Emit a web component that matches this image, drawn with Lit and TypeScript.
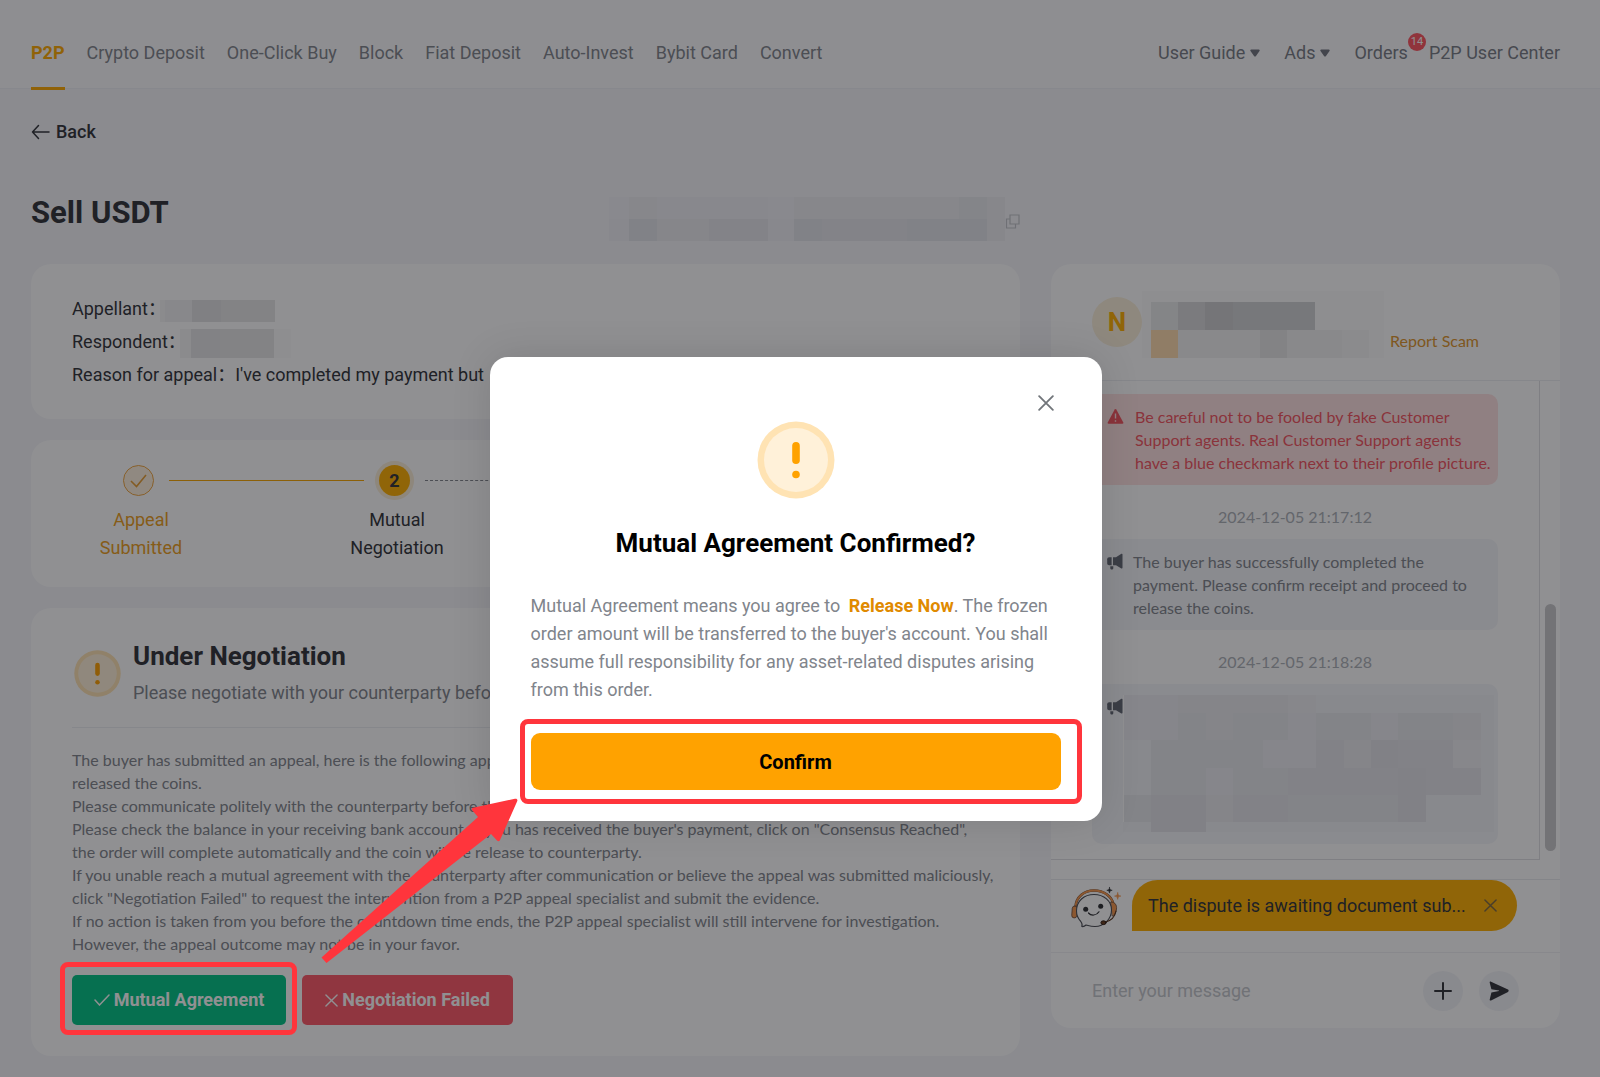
import { LitElement, html, svg, css } from "lit";
import { customElement } from "lit/decorators.js";

type Cell = [x: number, y: number, w: number, h: number, alpha: number];

const NAV = ["P2P", "Crypto Deposit", "One-Click Buy", "Block", "Fiat Deposit", "Auto-Invest", "Bybit Card", "Convert"];

const GUIDE: string[] = [
  "The buyer has submitted an appeal, here is the following appeal",
  "released the coins.",
  "Please communicate politely with the counterparty before the",
  "Please check the balance in your receiving bank account. If you has received the buyer's payment, click on \"Consensus Reached\",",
  "the order will complete automatically and the coin will be release to counterparty.",
  "If you unable reach a mutual agreement with the counterparty after communication or believe the appeal was submitted maliciously,",
  "click \"Negotiation Failed\" to request the intervention from a P2P appeal specialist and submit the evidence.",
  "If no action is taken from you before the countdown time ends, the P2P appeal specialist will still intervene for investigation.",
  "However, the appeal outcome may not be in your favor.",
];

const ORDER_ID: Cell[] = [
  [0, 0, 20, 22, 0.01], [20, 0, 28, 22, 0.03], [48, 0, 82, 22, 0.02], [130, 0, 29, 22, 0.02], [159, 0, 26, 22, 0.01], [185, 0, 165, 22, 0.03], [350, 0, 28, 22, 0.05], [378, 0, 18, 22, 0.03],
  [0, 22, 20, 22, 0.02], [20, 22, 28, 22, 0.07], [48, 22, 52, 22, 0.04], [100, 22, 59, 22, 0.06], [159, 22, 26, 22, 0.02], [185, 22, 28, 22, 0.07], [213, 22, 85, 22, 0.06], [298, 22, 80, 22, 0.07], [378, 22, 18, 22, 0.03],
];
const APPELLANT: Cell[] = [[0, 0, 5, 22, 0.04], [5, 0, 27, 22, 0.06], [32, 0, 29, 22, 0.12], [61, 0, 54, 22, 0.1]];
const RESPONDENT: Cell[] = [[0, 0, 11, 29, 0.04], [11, 0, 29, 29, 0.11], [40, 0, 54, 29, 0.1], [94, 0, 17, 29, 0.01]];
const NICKNAME: Cell[] = [
  [0, 4, 242, 67, 0.01],
  [9, 15, 27, 28, 0.08], [36, 15, 27, 28, 0.15], [63, 15, 28, 28, 0.2], [91, 15, 82, 28, 0.18],
  [36, 43, 82, 28, 0.04], [118, 43, 27, 28, 0.09], [145, 43, 55, 28, 0.04], [200, 43, 27, 28, 0.03],
];
const MESSAGE: Cell[] = [
  [0, 0, 379, 137, 0.01], [0, 0, 55, 18, 0.02], [55, 0, 110, 18, 0.03], [165, 0, 28, 18, 0.01],
  [0, 18, 55, 27, 0.02], [55, 18, 28, 27, 0.04], [83, 18, 27, 27, 0.03], [110, 18, 55, 27, 0.04], [165, 18, 28, 27, 0.02], [193, 18, 55, 27, 0.04], [248, 18, 27, 27, 0.02], [275, 18, 55, 27, 0.04], [330, 18, 28, 27, 0.03],
  [28, 45, 112, 28, 0.04], [140, 45, 53, 28, 0.02], [193, 45, 28, 28, 0.05], [221, 45, 27, 28, 0.03], [248, 45, 27, 28, 0.06], [275, 45, 55, 28, 0.05], [330, 45, 28, 28, 0.01],
  [28, 73, 55, 27, 0.04], [83, 73, 27, 27, 0.02], [110, 73, 55, 27, 0.04], [165, 73, 110, 27, 0.05], [275, 73, 28, 27, 0.06], [303, 73, 55, 27, 0.05],
  [0, 100, 28, 27, 0.04], [28, 100, 55, 37, 0.06], [83, 100, 27, 27, 0.03], [110, 100, 55, 27, 0.05], [165, 100, 110, 27, 0.04], [275, 100, 28, 27, 0.06],
];

const mosaic = (w: number, h: number, cells: Cell[], extra: unknown = null) => html`
  <svg class="mosaic" width=${w} height=${h} viewBox="0 0 ${w} ${h}" shape-rendering="crispEdges" aria-hidden="true">
    ${cells.map(([x, y, cw, ch, a]) => svg`<rect x=${x} y=${y} width=${cw} height=${ch} fill="#121420" fill-opacity=${a}></rect>`)}
    ${extra}
  </svg>`;

const caret = html`<svg width="10" height="8" viewBox="0 0 10 8" aria-hidden="true"><path d="M1.2.5h7.6c.8 0 1.2.9.7 1.5L6 7c-.5.7-1.500.7-2 0L.5 2C0 1.400.4.5 1.200.5z" fill="#71757f"/></svg>`;

const cross = (size: number, color: string, width: number) => html`
  <svg width=${size} height=${size} viewBox="0 0 14 14" fill="none" stroke=${color} stroke-width=${width} stroke-linecap="round" aria-hidden="true"><path d="M1 1l12 12M13 1L1 13"/></svg>`;

const alertMark = (size: number) => html`
  <svg width=${size} height=${size} viewBox="0 0 78 78" aria-hidden="true">
    <circle cx="39" cy="39" r="38.500" fill="#ffe3b3"/><circle cx="39" cy="39" r="32" fill="#fff1d9"/>
    <rect x="35.200" y="21" width="7.600" height="22" rx="3.800" fill="#ffa200"/><circle cx="39" cy="53.500" r="3.800" fill="#ffa200"/>
  </svg>`;

const megaphone = html`
  <svg class="lead" width="16" height="17" viewBox="0 0 16 17" fill="#636873" aria-hidden="true">
    <path d="M15.500 1.200v13.600c0 .7-.6.9-1.100.6L9 12.300H6V4.200h3L14.400.8c.5-.3 1.100-.2 1.100.4z"/>
    <path d="M4.600 4.200v8H2.200C1 12.200.2 11.400.2 10.200V6.200c0-1.200.8-2 2-2z"/>
    <path d="M3.300 13.300h3v2c0 1.600-3 1.600-3 0z"/>
  </svg>`;

@customElement("app-root")
export class AppRoot extends LitElement {
  static styles = css`
    :host { display: block; position: relative; min-height: 100vh; overflow: hidden; background: #f5f6fa; color: #303238; font: 18px/28px Roboto, "Noto Sans CJK SC", sans-serif; }
    * { box-sizing: border-box; }
    h1, h2, p { margin: 0; }
    a { color: inherit; text-decoration: none; }
    button { border: 0; padding: 0; font: inherit; cursor: pointer; background: none; }
    svg { display: block; flex: none; }

    .topbar { display: flex; justify-content: space-between; background: #fcfcfe; border-bottom: 1px solid #eef0f5; height: 89px; padding: 18px 40px 0 31px; color: #81858c; }
    .nav, .tools { display: flex; align-items: stretch; }
    .nav { gap: 22px; }
    .nav a, .tools a { display: flex; align-items: center; white-space: nowrap; }
    .nav .active { position: relative; color: #ffab00; font-weight: 700; }
    .nav .active::after { content: ""; position: absolute; left: 0; right: 0; bottom: -2px; height: 3px; background: #ffab00; }
    .tools { gap: 24px; color: #787c85; }
    .tools a { gap: 5px; }
    .tools .orders { gap: 0; margin-right: -3px; position: relative; }
    .badge { position: absolute; left: 100%; top: 15px; width: 18px; height: 18px; border-radius: 50%; background: #ff5560; color: #fff; font-size: 11px; line-height: 18px; text-align: center; }

    .page { padding: 31px 40px 21px 31px; }
    .back { display: flex; align-items: center; gap: 6px; height: 24px; font-weight: 500; }
    .title-row { display: grid; grid-template-columns: 989fr 509fr; gap: 31px; margin: 47px 0 23px; }
    .title { display: flex; justify-content: space-between; height: 50px; }
    .title h1 { font-size: 31px; line-height: 44px; font-weight: 700; }
    .order-id { display: flex; align-items: center; align-self: flex-end; }
    .order-id svg + svg { margin-top: 4px; }
    .columns { display: grid; grid-template-columns: 989fr 509fr; gap: 31px; align-items: start; }
    .stack { display: grid; gap: 21px; min-width: 0; }
    .card { background: #fff; border-radius: 20px; min-width: 0; overflow: hidden; }

    .parties { padding: 28px 41px; line-height: 33px; white-space: nowrap; }
    .parties p { display: flex; align-items: center; height: 33px; }
    .parties svg { margin: 4px 0 0 -6px; }

    .steps { display: flex; padding: 25px 0 25px 30px; }
    .step { width: 256px; }
    .step:last-child { flex: 1; }
    .rail { display: flex; align-items: center; gap: 15px; padding-left: 62px; margin-right: -47px; }
    .step:last-child .rail { margin-right: 0; }
    .rail::after { content: ""; flex: 1; border-top: 1px solid #f7a600; }
    .step:last-child .rail::after { border-top: 1px dashed #81858c; }
    .dot { width: 31px; height: 31px; border-radius: 50%; display: grid; place-items: center; font-weight: 700; }
    .done .dot { border: 1px solid #f0a640; background: #fff3e0; }
    .now .dot { background: #ffb000; box-shadow: 0 0 0 4px #fbeed6; }
    .label { width: 160px; margin-top: 10px; text-align: center; }
    .done .label { color: #eda01c; }

    .negotiation { padding: 31px 41px; }
    .neg-head { display: flex; align-items: center; gap: 12px; padding: 0 0 20px 2px; border-bottom: 1px solid #eceef2; white-space: nowrap; }
    .neg-head h2 { font-size: 26px; line-height: 34px; font-weight: 700; margin-bottom: 6px; }
    .neg-head p { color: #81858c; }
    .guide { margin: 20px 0; font: 16px/23px Lato, sans-serif; color: #81858c; white-space: nowrap; }
    .actions { display: flex; gap: 16px; }
    .spot { position: relative; }
    .action { display: flex; align-items: center; justify-content: center; gap: 4px; min-width: 214px; height: 50px; border-radius: 5px; color: #fff; font-weight: 700; }
    .agree { background: #00c585; }
    .fail { background: #ff5968; min-width: 211px; }
    .ring { position: absolute; z-index: 20; border: 5px solid #ff353c; border-radius: 8px; pointer-events: none; }
    .ring-agree { inset: -13px -11px -10px -12px; }
    .ring-confirm { inset: -14px -21px -14px -11px; }

    .chat-head { display: flex; align-items: center; height: 117px; padding-left: 41px; border-bottom: 1px solid #eceef2; }
    .avatar { width: 50px; height: 50px; border-radius: 50%; background: #fbf0da; color: #ffb000; font-size: 26px; line-height: 50px; font-weight: 700; text-align: center; }
    .report { font: 16px/23px Lato, sans-serif; color: #e0962c; padding: 36px 0 0 6px; white-space: nowrap; }
    .chat-body { display: flex; align-items: flex-start; padding-bottom: 19px; border-bottom: 1px solid #e9ebee; }
    .feed { flex: 1; min-width: 0; padding: 13px 41px 15px; border-right: 1px solid #dfe0e3; border-bottom: 1px solid #dfe0e3; font: 16px/23px Lato, sans-serif; }
    .thumb { width: 11px; height: 247px; margin: 0 4px 9px 5px; align-self: flex-end; border-radius: 6px; background: #c9c9cb; }
    .msg { display: flex; gap: 10px; padding: 11px 0 11px 15px; border-radius: 10px; background: #f4f5f9; color: #81858c; white-space: nowrap; }
    .warn { gap: 11px; background: #ffe2e2; color: #f4545f; }
    .lead { margin-top: 3px; }
    .time { display: block; text-align: center; line-height: 24px; margin: 20px 0 10px; color: #adb1b8; }
    .hidden-msg { height: 160px; gap: 0; }

    .bot { display: flex; align-items: flex-start; gap: 10px; padding: 0 43px 21px 20px; border-bottom: 1px solid #f0f1f4; }
    .bot-tip { flex: 1; min-width: 0; display: flex; align-items: center; gap: 16px; height: 51px; padding: 0 20px 0 16px; border-radius: 26px 26px 26px 0; background: #ffb000; }
    .bot-tip span { flex: 1; white-space: nowrap; }
    .composer { display: flex; align-items: center; gap: 16px; height: 75px; padding: 0 41px; }
    .composer input { flex: 1; min-width: 0; border: 0; padding: 0; background: none; font: inherit; outline: none; }
    .composer input::placeholder { color: #c4c7cc; opacity: 1; }
    .round { width: 40px; height: 40px; border-radius: 50%; background: #f3f4f8; display: grid; place-items: center; }

    .overlay { position: absolute; inset: 0; z-index: 10; display: flex; align-items: flex-start; justify-content: center; padding: 357px 9px 0 0; background: rgba(12, 14, 18, .46); }
    .modal { position: relative; width: 612px; padding: 64px 41px 31px; border-radius: 18px; background: #fff; box-shadow: 0 0 40px rgba(0, 0, 0, .12); display: flex; flex-direction: column; align-items: center; }
    .close { position: absolute; top: 36px; right: 46px; width: 20px; height: 20px; display: grid; place-items: center; }
    .modal h2 { margin-top: 26px; font-size: 26px; line-height: 36px; font-weight: 700; color: #000; }
    .modal p { align-self: stretch; margin: 31px 0 29px; color: #81858c; white-space: nowrap; }
    .modal b { color: #e08a00; margin-left: 4px; }
    .modal .spot { align-self: stretch; }
    .confirm { width: 100%; height: 57px; border-radius: 9px; background: #ffa200; color: #000; font-size: 20px; font-weight: 700; }
    .arrow { position: absolute; z-index: 21; left: 320px; top: 797px; pointer-events: none; }
  `;

  render() {
    return html`
      <header class="topbar">
        <nav class="nav">${NAV.map((n, i) => html`<a href="#" class=${i === 0 ? "active" : ""}>${n}</a>`)}</nav>
        <nav class="tools">
          <a href="#">User Guide ${caret}</a>
          <a href="#">Ads ${caret}</a>
          <a href="#" class="orders">Orders<span class="badge">14</span></a>
          <a href="#">P2P User Center</a>
        </nav>
      </header>

      <main class="page">
        <a class="back" href="#">
          <svg width="19" height="16" viewBox="0 0 19 16" fill="none" stroke="#303238" stroke-width="1.500" stroke-linecap="round" stroke-linejoin="round" aria-hidden="true"><path d="M18 8H1.500M7.500 1.500L1.500 8l6 6.500"/></svg>
          Back
        </a>
        <div class="title-row">
          <div class="title">
            <h1>Sell USDT</h1>
            <div class="order-id">
              ${mosaic(396, 44, ORDER_ID)}
              <svg width="15" height="15" viewBox="0 0 15 15" fill="none" stroke="#c3c5ca" stroke-width="1.200" aria-hidden="true"><path d="M5 1h9v9H5zM5 5H1.500v9H10.500v-4"/></svg>
            </div>
          </div>
        </div>

        <div class="columns">
          <div class="stack">
            <section class="card parties">
              <p>Appellant：${mosaic(115, 22, APPELLANT)}</p>
              <p>Respondent：${mosaic(111, 29, RESPONDENT)}</p>
              <p>Reason for appeal：I've completed my payment but</p>
            </section>

            <section class="card steps">
              <div class="step done">
                <div class="rail"><span class="dot"><svg width="17" height="14" viewBox="0 0 17 14" fill="none" stroke="#e89f35" stroke-width="1.600" aria-hidden="true"><path d="M1 7l5.500 5.500L16 1"/></svg></span></div>
                <div class="label">Appeal<br>Submitted</div>
              </div>
              <div class="step now">
                <div class="rail"><span class="dot">2</span></div>
                <div class="label">Mutual<br>Negotiation</div>
              </div>
            </section>

            <section class="card negotiation">
              <div class="neg-head">
                ${alertMark(47)}
                <div><h2>Under Negotiation</h2><p>Please negotiate with your counterparty before</p></div>
              </div>
              <div class="guide">${GUIDE.map((line) => html`<p>${line}</p>`)}</div>
              <div class="actions">
                <div class="spot">
                  <button class="action agree">
                    <svg width="16" height="12" viewBox="0 0 16 12" fill="none" stroke="#fff" stroke-width="1.500" stroke-linecap="round" aria-hidden="true"><path d="M1 6l4.500 5L15 1"/></svg>Mutual Agreement
                  </button>
                  <div class="ring ring-agree"></div>
                </div>
                <button class="action fail">${cross(13, "#fff", 1.5)}Negotiation Failed</button>
              </div>
            </section>
          </div>

          <section class="card">
            <div class="chat-head">
              <div class="avatar">N</div>
              ${mosaic(242, 71, NICKNAME, svg`<rect x="9" y="43" width="27" height="28" fill="#ffdcae"></rect>`)}
              <a class="report" href="#">Report Scam</a>
            </div>
            <div class="chat-body">
              <div class="feed">
                <div class="msg warn">
                  <svg class="lead" width="17" height="17" viewBox="0 0 17 17" aria-hidden="true"><path d="M7.700 1.500c.4-.7 1.200-.7 1.600 0l7 13c.3.700 0 1.200-.8 1.200h-14c-.8 0-1.100-.5-.8-1.200z" fill="#f4545f"/><path d="M8.500 5.500v5M8.500 12.300v1.500" stroke="#ffe2e2" stroke-width="1.400"/></svg>
                  <div>Be careful not to be fooled by fake Customer<br>Support agents. Real Customer Support agents<br>have a blue checkmark next to their profile picture.</div>
                </div>
                <time class="time">2024-12-05 21:17:12</time>
                <div class="msg">${megaphone}<div>The buyer has successfully completed the<br>payment. Please confirm receipt and proceed to<br>release the coins.</div></div>
                <time class="time">2024-12-05 21:18:28</time>
                <div class="msg hidden-msg">${megaphone}${mosaic(371, 137, MESSAGE, svg`<rect x="0" y="0" width="1" height="127" fill="#fff"></rect>`)}</div>
              </div>
              <div class="thumb"></div>
            </div>
            <div class="bot">
              <svg width="51" height="51" viewBox="0 -5 51 51" fill="none" stroke-linecap="round" stroke-linejoin="round" aria-hidden="true">
                <path d="M4.500 22C5 12 13 5.500 23 5.500s18 6 19.500 14" stroke="#6b4a35" stroke-width="2.600"/>
                <path d="M4.500 22C5 12 13 5.500 23 5.500s18 6 19.500 14" stroke="#f6964a" stroke-width="1.800"/>
                <rect x="1" y="21" width="5" height="12" rx="2.500" transform="rotate(4 4 27)" fill="#f6964a" stroke="#6b4a35" stroke-width=".8"/>
                <path d="M40 17c4 0 6 3 5.500 7s-2 6.500-4 7z" fill="#f6964a" stroke="#6b4a35" stroke-width=".8"/>
                <path d="M23 9.500c10 0 17.500 6.500 17.500 15.500S33 41.500 24 41.500c-4 0-7-1-9-1.500-1.500 1.500-3 1.800-4.200 1.500.8-1.500.4-3-1-5C7 33.500 5.500 30 5.500 26 5.500 16 13 9.500 23 9.500z" fill="#fff" stroke="#4a4c53" stroke-width="1.100"/>
                <circle cx="14.700" cy="24.300" r="2.500" fill="#2c2d31"/><circle cx="29.700" cy="21.300" r="2.500" fill="#2c2d31"/>
                <path d="M17.500 28c2.500 3 8 2.800 10.500-1.200" stroke="#2c2d31" stroke-width="1.200"/>
                <path d="M45 26c-1 6-5 10-11.500 11.500" stroke="#5a3318" stroke-width="1.200"/>
                <ellipse cx="32.500" cy="37.700" rx="2.600" ry="1.900" fill="#6b3d1d" stroke="#2b1a10"/>
                <path d="M38.500 2.500c.3 2 .7 2.500 2.700 2.800-2 .3-2.400.8-2.700 2.800-.3-2-.7-2.500-2.700-2.800 2-.3 2.400-.8 2.700-2.800z" fill="#2c2d31" stroke="#2c2d31" stroke-width=".6"/>
                <path d="M46.700 7.800c.3 2.400.9 3 3.200 3.300-2.300.3-2.900.9-3.200 3.300-.3-2.400-.9-3-3.200-3.300 2.300-.3 2.900-.9 3.200-3.300z" fill="#f6964a" stroke="#f6964a" stroke-width=".6"/>
              </svg>
              <div class="bot-tip"><span>The dispute is awaiting document sub...</span><button aria-label="Dismiss">${cross(13, "#7d6840", 1.6)}</button></div>
            </div>
            <form class="composer" @submit=${(e: Event) => e.preventDefault()}>
              <input type="text" placeholder="Enter your message" aria-label="Enter your message">
              <button class="round" type="button" aria-label="Add"><svg width="18" height="18" viewBox="0 0 18 18" stroke="#303238" stroke-width="2" stroke-linecap="round" aria-hidden="true"><path d="M9 1v16M1 9h16"/></svg></button>
              <button class="round" type="submit" aria-label="Send"><svg width="20" height="20" viewBox="0 0 20 20" fill="#303238" aria-hidden="true"><path d="M2 .7l17 7.900c.9.400.9 1.800 0 2.300L2 19.400c-.8.400-1.500-.2-1.300-1L2.400 11.500 10 10.100v-.6L2.400 8.300.7 1.700C.5.900 1.200.3 2 .7z"/></svg></button>
            </form>
          </section>
        </div>
      </main>

      <div class="overlay">
        <div class="modal" role="dialog" aria-modal="true" aria-labelledby="dialog-title">
          <button class="close" aria-label="Close">${cross(16, "#71757a", 1.6)}</button>
          ${alertMark(78)}
          <h2 id="dialog-title">Mutual Agreement Confirmed?</h2>
          <p>Mutual Agreement means you agree to <b>Release Now</b>. The frozen<br>order amount will be transferred to the buyer's account. You shall<br>assume full responsibility for any asset-related disputes arising<br>from this order.</p>
          <div class="spot"><button class="confirm">Confirm</button><div class="ring ring-confirm"></div></div>
        </div>
      </div>
      <svg class="arrow" width="200" height="168" viewBox="0 0 200 168" aria-hidden="true"><path d="M1.500 160.500L158 20l-6-7c-.8-1 0-2 1-2.200L195 1.800c1.800-.3 2.800.8 2.300 2.200L180 43c-.6 1.500-2 1.500-3 .5L171 37 6.500 166z" fill="#ff353c"/></svg>
    `;
  }
}
